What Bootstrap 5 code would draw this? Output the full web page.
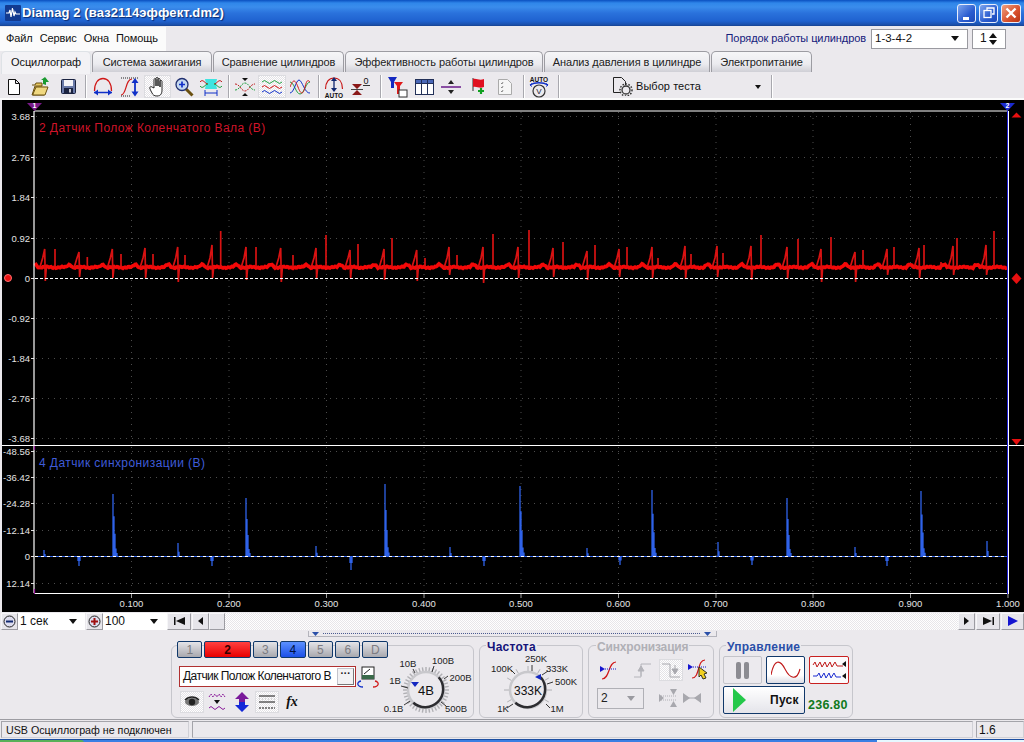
<!DOCTYPE html>
<html lang="ru">
<head>
<meta charset="utf-8">
<title>Diamag 2</title>
<link rel="stylesheet" href="https://cdn.jsdelivr.net/npm/bootstrap@5.3.0/dist/css/bootstrap.min.css">
<style>
html,body{margin:0;height:742px;overflow:hidden;background:#ebe9ed}
body{width:1024px;font:11px/1.2 "Liberation Sans",Arial,sans-serif;color:#111}
svg{display:block;flex:none}
svg text{font-family:"Liberation Sans",Arial,sans-serif}
.wtitle{height:26px;background:linear-gradient(#0a4fc0 0,#2f86ea 3px,#3a8cec 7px,#2a72dc 13px,#1f62d0 21px,#1a4ea8 25px,#16408c 26px);padding:0 3px 0 5px}
.wtitle-txt{color:#fff;font-weight:700;font-size:13px;letter-spacing:.1px;margin-left:1px;text-shadow:1px 1px 1px #0a2a70}
.wbtn{width:19px;height:19px;border:1px solid #e8eefc;border-radius:3px;background:linear-gradient(135deg,#7ea6ee,#2a5cd0 60%,#1d49b8);margin-right:3px}
.wbtn-close{width:20px;margin:0;background:linear-gradient(135deg,#f0a080,#d8502c 60%,#b83414)}
.menubar{height:25px}
.menu-left{width:166px;height:24px;background:#fbfbfb;padding-left:6px;gap:7px;letter-spacing:-.1px}
.order-lbl{color:#15207c;margin-right:5px;letter-spacing:-.08px}
.combo{background:#fff;border:1px solid #9a9aa0;height:20px;padding-left:3px;font-size:12px}
.combo-order{width:97px;margin-right:4px;font-size:11.5px}
.combo-spin{width:34px;margin-right:18px;padding-left:7px}
.caret{width:0;height:0;border:4px solid transparent;border-top:5px solid #111;border-bottom:0}
.caret-up{border-top:0;border-bottom:5px solid #111}
.spin-arrows{gap:2px}
.tabs-row{padding-left:1px;height:22px;border-bottom:1px solid #9c9ca2}
.tabs-row .nav-link{height:21px;padding:0;margin:0 1px 0 0;color:#222;font-size:11px;letter-spacing:-.08px;text-align:center;line-height:20px;background:linear-gradient(#f6f6f8,#ebebef 60%,#cfcfd6);border:1px solid #9c9ca2;border-bottom:0;border-radius:5px 5px 0 0}
.tabs-row .nav-link.active{background:#f3f2f5;height:23px;color:#111;position:relative;z-index:1}
.tw1{width:90px}.tw2{width:120px}.tw3{width:131px}.tw4{width:198px}.tw5{width:166px}.tw6{width:101px}
.toolbar{height:27px;padding:2px 0 0 1px;border-bottom:2px solid #fbfbfb;box-sizing:border-box}
.tb{height:23px;display:flex;align-items:center;justify-content:center}
.on{background:repeating-conic-gradient(#fff 0 25%,#e4e2e6 0 50%) 0 0/2px 2px;box-shadow:inset 0 0 0 1px #dcdce0}
.w22{width:22px}.w24{width:24px}.w26{width:26px}.w27{width:27px}.w28{width:28px}
.tsep{height:23px;display:flex;justify-content:center}
.tsep::after{content:"";width:1px;height:23px;background:#a8a8ae;box-shadow:1px 0 #fff}
.s7{width:7px}.s8{width:8px}.s10{width:10px}.s12{width:12px}.s16{width:16px}
.testbtn{width:202px;padding-left:46px;font-size:11px;letter-spacing:.05px;gap:3px}
.testbtn .caret{margin-left:auto;margin-right:7px;border-width:3px;border-top-width:4px}
.scope{height:512px;background:#000;margin-left:2px;width:1022px}
.hbar{height:18px}
.hbtn{height:17px;background:#e6e5ea;border:1px solid #f6f6f8;border-right-color:#9c9ca2;border-bottom-color:#9c9ca2;display:flex;align-items:center;justify-content:center}
.zoombtn{width:17px;margin-left:1px}
.hcombo{height:17px;background:#fff;padding-left:2px;font-size:12px}
.hc1{width:67px;padding-right:8px}.hc2{width:64px;padding-right:9px}
.hb1{width:24px}.hb2{width:17px;margin-left:1px}.hb3{width:16px}
.htrack{flex:1;height:17px;background:repeating-conic-gradient(#fff 0 25%,#e8e6ea 0 50%) 0 0/2px 2px}
.hb4{width:17px;margin-right:1px}.hb5{width:24px;margin-right:1px}.hb6{width:23px}
.lower{height:88px}
.splitter{width:409px;height:6px;margin:1px 0 0 308px;border:1px solid #b4b4bc;border-top:0;padding:0 5px 0 3px}
.dots{flex:1;border-top:1px dotted #4a5a90}
.panels{margin-left:171px;margin-top:8px;gap:5px}
.grp{height:73px;border:1px solid #c6c6cc;border-radius:6px}
.grp1{width:303px}.grp2{width:104px}.grp3{width:126px}.grp4{width:134px}
.grp-ttl{display:block;width:fit-content;margin:-6px 0 0 6px;padding:0 1px;height:14px;background:#ebe9ed;font-size:12px;font-weight:700;line-height:14px;letter-spacing:.25px}
.tt-navy{color:#14147a}.tt-gray{color:#b0b0b6;margin-left:7px;letter-spacing:-.16px}.tt-blue{color:#2a4fa8;margin-left:6px;letter-spacing:.22px}
.chcol{width:216px}
.chrow{gap:2px;margin:-5px 0 0 5px}
.chb{width:26px;height:17px;border:1px solid #10386a;border-radius:2px;background:linear-gradient(#e4e4e8,#a8a8ae);color:#7c7c82;font-size:12px;line-height:14px;text-align:center;padding:0}
.chb2{width:47px;background:linear-gradient(#ff4040,#e80000);color:#300;font-weight:700}
.chb4{background:linear-gradient(#5a90ff,#1c50e8);color:#001040}
.chname{width:177px;height:21px;margin:8px 0 0 7px;border:1px solid #b03030;background:#fff;padding:0 1px 0 3px;font-size:12px;letter-spacing:-.55px;white-space:nowrap}
.dotsbtn{width:17px;height:17px;margin-left:auto;border:1px solid #c4c4cc;border-right-color:#777;border-bottom-color:#777;background:#f2f2f4;font-weight:700;font-size:10px;line-height:10px;text-align:center;letter-spacing:0}
.iconrow{margin:1px 0 0 8px;gap:1px}
.ib{width:24px;height:22px;display:flex;align-items:center;justify-content:center}
.fx-t{font:italic 700 14px "Liberation Serif",serif}
.chmeter{margin:8px 0 0 0}
.knob-svg{overflow:visible}
.syncrow{margin:5px 0 0 6px}
.syncrow2{margin:6px 0 0 8px}
.syncsel{width:47px;height:21px;border:1px solid #b0b0b6;padding-left:3px;font-size:12px;color:#222;gap:0}
.syncsel .caret{margin-left:auto;margin-right:8px;border-top-color:#9a9aa0}
.cbtn{width:39px;height:28px;border:1px solid #c4c4ca;border-radius:2px;background:#eceaee;display:flex;align-items:center;justify-content:center;padding:0}
.cb-navy{border-color:#10386a;background:linear-gradient(#fff 70%,#dcdce4)}
.cb-red{border-color:#c82020;width:40px;background:#fbfafc}
.cb-row{gap:4px;margin:2px 0 0 3px}
.start-row{margin:2px 0 0 3px}
.startb{width:82px;height:28px;padding:0 0 0 9px;background:linear-gradient(#fff,#e4e4ea);border:1px solid #10386a;border-radius:2px;display:flex;align-items:center;font-weight:700;font-size:12px;color:#111;letter-spacing:.3px}
.startb span{margin-left:24px}
.freq{color:#127a20;font-weight:700;font-size:12.5px;letter-spacing:.25px;margin:0 0 1px 3px}
.statusbar{height:20px;border-top:1px solid #9c9ca2;padding:1px 0 0 1px}
.stp{height:17px;padding:0 0 0 4px;line-height:16px;border:1px solid #d0d0d6;border-top-color:#a4a4aa;border-left-color:#a4a4aa;font-size:10.7px;margin-right:3px}
.st1{width:188px}.st2{flex:1}.st3{width:48px;margin:0;padding-left:2px;font-size:12px}
.taskbar{height:4px;background:#3a80e4;border-top:1px solid #1c4ea0;position:relative}
.start-strip{width:84px;height:3px;background:#58b058;border-radius:0 4px 0 0}
.task-light{margin-left:auto;width:147px;height:3px;background:#e6f8ff}
</style>
</head>
<body>

<header class="wtitle d-flex align-items-center">
  <svg width="16" height="16" viewBox="0 0 16 16"><rect width="16" height="16" rx="1" fill="#123a90"/><path d="M1 8h3l1-3 1 7 1.500-9 1.500 8 1-4 1 2h4" fill="none" stroke="#fff" stroke-width="1.200"/></svg>
  <span class="wtitle-txt">Diamag 2 (ваз2114эффект.dm2)</span>
  <div class="d-flex ms-auto">
    <div class="wbtn d-flex align-items-end justify-content-center"><svg width="9" height="6" viewBox="0 0 9 6"><rect x="1" y="1" width="6" height="3" fill="#fff"/></svg></div>
    <div class="wbtn d-flex align-items-center justify-content-center"><svg width="12" height="12" viewBox="0 0 12 12" fill="none" stroke="#fff" stroke-width="1.300"><path d="M4 3V1h7v6H9"/><rect x="1" y="3.500" width="7" height="7"/></svg></div>
    <div class="wbtn wbtn-close d-flex align-items-center justify-content-center"><svg width="12" height="12" viewBox="0 0 12 12"><path d="M1.500 1.500l9 9M10.500 1.500l-9 9" stroke="#fff" stroke-width="2.400"/></svg></div>
  </div>
</header>

<div class="menubar d-flex align-items-center">
  <div class="menu-left d-flex align-items-center"><span>Файл</span><span>Сервис</span><span>Окна</span><span>Помощь</span></div>
  <div class="d-flex align-items-center ms-auto">
    <span class="order-lbl">Порядок работы цилиндров</span>
    <div class="combo combo-order d-flex align-items-center">1-3-4-2<i class="caret ms-auto me-2"></i></div>
    <div class="combo combo-spin d-flex align-items-center">1<span class="spin-arrows d-flex flex-column ms-auto me-2"><i class="caret caret-up"></i><i class="caret"></i></span></div>
  </div>
</div>

<ul class="nav nav-tabs tabs-row border-0 flex-nowrap">
  <li class="nav-item"><a class="nav-link active tw1" href="#">Осциллограф</a></li>
  <li class="nav-item"><a class="nav-link tw2" href="#">Система зажигания</a></li>
  <li class="nav-item"><a class="nav-link tw3" href="#">Сравнение цилиндров</a></li>
  <li class="nav-item"><a class="nav-link tw4" href="#">Эффективность работы цилиндров</a></li>
  <li class="nav-item"><a class="nav-link tw5" href="#">Анализ давления в цилиндре</a></li>
  <li class="nav-item"><a class="nav-link tw6" href="#">Электропитание</a></li>
</ul>

<div class="toolbar d-flex align-items-center">
  <div class="tb w26"><svg width="14" height="16" viewBox="0 0 14 16"><path d="M1.500.500h7l4 4v11h-11z M8.500.500v4h4" fill="#fff" stroke="#111"/></svg></div>
  <div class="tb w27"><svg width="20" height="20" viewBox="0 0 20 20"><path d="M1 8h3l1-2h6v3h-7l-3 9h12l3-8" fill="#e8c860" stroke="#6a5010"/><path d="M2 17l3-7h12l-3 8H2z" fill="#f0d880" stroke="#6a5010"/><path d="M12 7V3H10l4-3 4 5-3 0v3z" fill="#1a9a30"/></svg></div>
  <div class="tb w28"><svg width="15" height="15" viewBox="0 0 15 15"><rect x=".5" y=".5" width="14" height="14" rx="1" fill="#6a7aa8" stroke="#1a2240"/><rect x="3" y="1" width="9" height="6" fill="#f4f4f8"/><rect x="3" y="9" width="9" height="5.500" fill="#1a2240"/><rect x="8" y="10" width="2" height="3.500" fill="#c8c8d0"/></svg></div>
  <div class="tsep s7"></div>
  <div class="tb w27"><svg width="20" height="20" viewBox="0 0 20 20" fill="none"><path d="M1.500 14C1.500 6 5 1.500 10 1.500S18.500 6 18.500 14" stroke="#d01818" stroke-width="1.300"/><path d="M1 15.500h18" stroke="#1030c8" stroke-width="1.500"/><path d="M1 15.500l4-3v6zM19 15.500l-4-3v6z" fill="#1030c8"/></svg></div>
  <div class="tb w28"><svg width="20" height="20" viewBox="0 0 20 20" fill="none"><path d="M1 1h18" stroke="#222" stroke-dasharray="1 1"/><path d="M1 18c6 0 4-16 11-16" stroke="#d01818" stroke-width="1.200"/><path d="M1 19h9" stroke="#222" stroke-dasharray="1 1"/><path d="M15 3v15" stroke="#1030c8" stroke-width="1.800"/><path d="M15 1l3.500 5h-7zM15 19.500l3.500-5h-7z" fill="#1030c8"/></svg></div>
  <div class="tb w27 on"><svg width="18" height="20" viewBox="0 0 18 20"><path d="M5 11V3c0-2 2-2 2 0v6V1.500c0-1.500 2-1.500 2 0V9 2.500c0-1.500 2-1.500 2 0V10 4.500c0-1.500 2-1.500 2 0V13c0 3-1 6-5 6-3 0-4-1-5-3L1 12c-1-2 1-3 2-2z" fill="#fff" stroke="#111" stroke-width=".9"/></svg></div>
  <div class="tb w26"><svg width="20" height="20" viewBox="0 0 20 20"><path d="M12 12l6.500 6.500" stroke="#6a5010" stroke-width="3"/><circle cx="8" cy="7.500" r="6" fill="#c4d8f0" stroke="#203070" stroke-width="1.300"/><path d="M5 7.500h6M8 4.500v6" stroke="#1030c8" stroke-width="1.700"/></svg></div>
  <div class="tb w27"><svg width="22" height="20" viewBox="0 0 22 20" fill="none"><path d="M5 2h12l-1 5 1 5H5l1-5z" fill="#40e4e0"/><path d="M0 5c3-4 5 2 8 2M22 5c-3-4-5 2-8 2" stroke="#c02020"/><path d="M0 9c3 4 5-2 8-2M22 9c-3 4-5-2-8-2" stroke="#20a040"/><path d="M5 16h12" stroke="#1030c8"/><path d="M5 13v6M17 13v6" stroke="#1030c8"/></svg></div>
  <div class="tsep s8"></div>
  <div class="tb w26"><svg width="20" height="20" viewBox="0 0 20 20" fill="none"><path d="M0 7c5 0 6 7 10 7s5-7 10-7" stroke="#c02020" stroke-dasharray="2 1"/><path d="M0 13c5 0 6-7 10-7s5 7 10 7" stroke="#20a040" stroke-dasharray="2 1"/><path d="M7 1h6l-3 3zM7 19h6l-3-3z" fill="#111"/></svg></div>
  <div class="tb w28 on"><svg width="20" height="18" viewBox="0 0 20 18" fill="none"><path d="M0 4q2.500-3 5 0t5 0 5 0 5 0" stroke="#20a040"/><path d="M0 9q2.500-3 5 0t5 0 5 0 5 0" stroke="#d01818"/><path d="M0 14q2.500-3 5 0t5 0 5 0 5 0" stroke="#1030c8"/></svg></div>
  <div class="tb w28"><svg width="20" height="18" viewBox="0 0 20 18" fill="none"><path d="M0 4c4 0 6 12 10 12S16 4 20 4" stroke="#20a040"/><path d="M0 15C4 15 6 2 9 2s6 14 11 13" stroke="#1030c8"/><path d="M0 9C3 1 5 1 8 9s5 8 7 0 3-7 5-5" stroke="#d01818"/></svg></div>
  <div class="tsep s8"></div>
  <div class="tb w24"><svg width="20" height="22" viewBox="0 0 20 22" fill="none"><path d="M1.500 13C1.500 6 5 2 10 2s8.500 4 8.500 11" stroke="#c81818" stroke-width="1.200"/><path d="M10 3v12" stroke="#102870" stroke-width="1.300"/><path d="M10 1l3 4H7zM10 16l3-4H7z" fill="#102870"/><text x="10" y="21.500" font-size="6.500" font-weight="700" text-anchor="middle" fill="#111">AUTO</text></svg></div>
  <div class="tb w28"><svg width="20" height="20" viewBox="0 0 20 20"><path d="M2 7h10L7 12zM2 18h10l-5-5z" fill="#8a1818"/><path d="M1 12.500h12" stroke="#444"/><path d="M13 8.500h7" stroke="#333"/><text x="16" y="7" font-size="9" text-anchor="middle" fill="#111">0</text></svg></div>
  <div class="tsep s12"></div>
  <div class="tb w24"><svg width="20" height="22" viewBox="0 0 20 22"><path d="M0 1h9L6 6v6H3V6z" fill="#1428c0"/><path d="M6 6h9l-3 4v8H9V10z" fill="#e01818"/><rect x="11" y="14" width="8" height="7" fill="#fff" stroke="#333"/></svg></div>
  <div class="tb w28"><svg width="19" height="16" viewBox="0 0 19 16"><rect x=".5" y=".5" width="18" height="15" fill="#fff" stroke="#223058"/><rect x=".5" y=".5" width="18" height="4" fill="#4a68b8" stroke="#223058"/><path d="M6.500 1v14M12.500 1v14" stroke="#223058"/></svg></div>
  <div class="tb w26"><svg width="20" height="14" viewBox="0 0 20 14"><path d="M0 7h20" stroke="#6a1a8a" stroke-width="1.500"/><path d="M10 0l3 4H7zM10 14l3-4H7z" fill="#222"/></svg></div>
  <div class="tb w28"><svg width="15" height="18" viewBox="0 0 15 18"><path d="M2 0v13" stroke="#333"/><path d="M2 1c4-1 6 2 11 0v8c-5 2-7-1-11 0z" fill="#e01020"/><path d="M10 10v6M7 13h6" stroke="#10a020" stroke-width="2.200"/></svg></div>
  <div class="tb w26"><svg width="14" height="16" viewBox="0 0 14 16"><path d="M.5.500h9l4 4v11H.500z" fill="#f6f6f6" stroke="#aaa"/><path d="M3 4l1 1 1-2M3 8l1 1 1-2M3 12l1 1 1-2" stroke="#888" fill="none"/></svg></div>
  <div class="tsep s10"></div>
  <div class="tb w22"><svg width="20" height="22" viewBox="0 0 20 22" fill="none"><text x="10" y="6" font-size="6.500" font-weight="700" text-anchor="middle" fill="#111">AUTO</text><path d="M1 9c5-3 13-3 18 0" stroke="#1030c8" stroke-width="1.300"/><circle cx="10" cy="15" r="6" stroke="#333" stroke-width="1.200"/><path d="M3 7.500l-2 1.500 2 1.500M17 7.500l2 1.500-2 1.500" stroke="#1030c8"/><text x="10" y="18" font-size="8" text-anchor="middle" fill="#223">V</text></svg></div>
  <div class="tsep s16"></div>
  <div class="tb testbtn"><svg width="21" height="19" viewBox="0 0 21 19" fill="none"><path d="M1.500.500h8l4 4V8M1.500.500v15h7" stroke="#222"/><circle cx="14" cy="13" r="4" stroke="#333" stroke-width="1.300"/><circle cx="14" cy="13" r="6" stroke="#333" stroke-width="1.500" stroke-dasharray="1.500 1.500"/></svg><span>Выбор теста</span><i class="caret"></i></div>
  <div class="tsep s7"></div>
</div>

<div class="scope">
  <svg id="plot" width="1022" height="512" viewBox="2 100 1022 512">
    <g id="grid"></g>
    <text x="39" y="132" font-size="12" letter-spacing=".42" fill="#d0142a">2 Датчик Полож Коленчатого Вала (В)</text>
    <text x="39" y="467" font-size="12" letter-spacing=".42" fill="#3f5cd8">4 Датчик синхронизации (В)</text>
    <path id="redbase" fill="none" stroke="#f40808" stroke-width="3.600"/>
    <path id="redspk" fill="none" stroke="#d81212" stroke-width="1.700"/>
    <path id="bluespk" fill="none" stroke="#2f62e8" stroke-width="1.300"/>
    <path d="M35 278.500H1007" stroke="#fff" stroke-dasharray="3 2"/>
    <path d="M35 556.500H1007" stroke="#2f62e8"/>
    <path d="M35 556.500H1007" stroke="#fff" stroke-dasharray="3 3"/>
    <path d="M34 111V445M34 446V593M34.500 111H1008M34.500 593.500H1008M2 445.500H1024" stroke="#fff" stroke-width="1.200"/>
    <path d="M1007.500 111V594" stroke="#2020d8"/>
    <path d="M1008.500 111V594" stroke="#fff"/>
    <path d="M34.500 446v4M34.500 589v5" stroke="#a020a0" stroke-width="1.200"/>
    <path d="M27 103h15l-7.500 8z" fill="#7a1a8a"/><text x="34.500" y="108" font-size="7" font-weight="700" text-anchor="middle" fill="#fff">1</text>
    <path d="M1000 103h15l-7.500 8z" fill="#1a2ad0"/><text x="1007.500" y="108" font-size="7" font-weight="700" text-anchor="middle" fill="#fff">2</text>
    <path d="M1016.500 112.500l5 5h-10zM1016.500 445l5-6h-10z" fill="#e81010"/>
    <path d="M1016.500 273l5 5.500-5 5.500-5-5.500z" fill="#e81010"/>
    <circle cx="8" cy="278" r="3.500" fill="#e81010" stroke="#ff7070"/>
  </svg>
</div>

<div class="hbar d-flex align-items-center">
  <div class="hbtn zoombtn"><svg width="13" height="13" viewBox="0 0 13 13"><circle cx="6.500" cy="6.500" r="5.500" fill="#dde" stroke="#222"/><path d="M3 6.500h7" stroke="#102870" stroke-width="2"/></svg></div>
  <div class="hcombo hc1 d-flex align-items-center">1 сек<i class="caret ms-auto"></i></div>
  <div class="hbtn zoombtn"><svg width="13" height="13" viewBox="0 0 13 13"><circle cx="6.500" cy="6.500" r="5.500" fill="#dde" stroke="#222"/><path d="M3 6.500h7M6.500 3v7" stroke="#a01010" stroke-width="2"/></svg></div>
  <div class="hcombo hc2 d-flex align-items-center">100<i class="caret ms-auto"></i></div>
  <div class="hbtn hb1"><svg width="11" height="8" viewBox="0 0 11 8"><path d="M0 0h1.500v8H0zM2 4l9-4v8z" fill="#111"/></svg></div>
  <div class="hbtn hb2"><svg width="5" height="8" viewBox="0 0 5 8"><path d="M5 0v8L0 4z" fill="#111"/></svg></div>
  <div class="hbtn hb3"></div>
  <div class="htrack"></div>
  <div class="hbtn hb4"><svg width="5" height="8" viewBox="0 0 5 8"><path d="M0 0v8l5-4z" fill="#111"/></svg></div>
  <div class="hbtn hb5"><svg width="11" height="8" viewBox="0 0 11 8"><path d="M11 0H9.500v8H11zM9 4L0 0v8z" fill="#111"/></svg></div>
  <div class="hbtn hb6"><svg width="10" height="10" viewBox="0 0 10 10"><path d="M0 0v10l10-5z" fill="#1414d0"/></svg></div>
</div>

<div class="lower">
  <div class="splitter d-flex align-items-center"><svg width="7" height="4" viewBox="0 0 7 4" class="me-1"><path d="M0 0h7L3.500 4z" fill="#2a4fa8"/></svg><span class="dots"></span><svg width="7" height="4" viewBox="0 0 7 4" class="ms-1"><path d="M0 0h7L3.500 4z" fill="#2a4fa8"/></svg></div>
  <div class="panels d-flex">
    <section class="grp grp1 d-flex">
      <div class="chcol">
        <div class="chrow d-flex">
          <button class="chb">1</button><button class="chb chb2">2</button><button class="chb">3</button><button class="chb chb4">4</button><button class="chb">5</button><button class="chb">6</button><button class="chb">D</button>
        </div>
        <div class="d-flex align-items-start">
          <div class="chname d-flex align-items-center"><span>Датчик Полож Коленчатого В</span><span class="dotsbtn">···</span></div>
          <svg class="chmeter" width="24" height="24" viewBox="0 0 24 24"><rect x="6" y="1" width="12" height="12" fill="#fff" stroke="#222"/><rect x="6" y="9" width="12" height="4" fill="#3a6a4a"/><path d="M8 8l6-5" stroke="#222"/><path d="M5 15c-5 1-4 6 2 6" fill="none" stroke="#1030c8" stroke-width="1.300"/><path d="M19 15c5 1 4 6-2 6" fill="none" stroke="#d01818" stroke-width="1.300"/></svg>
        </div>
        <div class="iconrow d-flex">
          <div class="ib on"><svg width="18" height="12" viewBox="0 0 18 12"><ellipse cx="9" cy="6" rx="7" ry="4" fill="#777"/><circle cx="9" cy="6" r="3.200" fill="#222"/><path d="M2 4c4-4 10-4 14 0" stroke="#222" stroke-width="1.400" fill="none"/></svg></div>
          <div class="ib"><svg width="18" height="20" viewBox="0 0 18 20" fill="none"><path d="M1 5l2-3 2 3 2-3 2 3 2-3 2 3 2-3 2 3" stroke="#8a1a9a" stroke-dasharray="2 1"/><path d="M6 8h6l-3 4z" fill="#111"/><path d="M1 16q2-3 4 0t4 0 4 0 4 0" stroke="#8a1a9a"/></svg></div>
          <div class="ib"><svg width="16" height="20" viewBox="0 0 16 20"><path d="M8 0l7 7h-4v3H5V7H1z" fill="#7a1a9a"/><path d="M8 20l7-7h-4v-3H5v3H1z" fill="#1428d8"/></svg></div>
          <div class="ib on"><svg width="18" height="16" viewBox="0 0 18 16"><path d="M1 2h16M1 8h16" stroke="#111"/><path d="M1 14h16" stroke="#111" stroke-dasharray="2 1"/><path d="M1 5h16" stroke="#bbb" stroke-dasharray="1 2"/></svg></div>
          <div class="ib"><span class="fx-t">fx</span></div>
        </div>
      </div>
      <svg id="knob1" class="knob-svg ms-auto" width="84" height="72" viewBox="389 646 84 72"></svg>
    </section>
    <section class="grp grp2">
      <span class="grp-ttl tt-navy">Частота</span>
      <svg id="knob2" class="knob-svg" width="102" height="63" viewBox="480 654 102 63"></svg>
    </section>
    <section class="grp grp3">
      <span class="grp-ttl tt-gray">Синхронизация</span>
      <div class="syncrow d-flex align-items-center">
        <div class="ib ms-1"><svg width="22" height="20" viewBox="0 0 22 20" fill="none"><path d="M2 19c8 0 6-17 14-17" stroke="#d01818" stroke-width="1.200"/><path d="M0 6l5 3-5 3z" fill="#1414d0"/><path d="M5 9h12" stroke="#1414d0" stroke-dasharray="1 1"/></svg></div>
        <div class="ib ms-2"><svg width="20" height="18" viewBox="0 0 20 18" fill="none" stroke="#b4b4ba"><path d="M1 16h7V3h10"/><path d="M8 5l-3 5h6zM8 15V9" fill="#b4b4ba"/></svg></div>
        <div class="ib on ms-1"><svg width="20" height="18" viewBox="0 0 20 18" fill="none" stroke="#a8a8ae"><path d="M1 3h8v13h10"/><path d="M14 13l-3-5h6zM14 4v6" fill="#a8a8ae"/></svg></div>
        <div class="ib ms-1"><svg width="22" height="22" viewBox="0 0 22 22" fill="none"><path d="M4 19C12 19 9 1 17 1" stroke="#d01818" stroke-width="1.200"/><path d="M0 5l5 3-5 3z" fill="#1414d0"/><path d="M5 8h14" stroke="#1414d0" stroke-dasharray="1 1"/><path d="M11 8l8 6-3 1 2 4-3 1-2-4-2 2z" fill="#f0d020" stroke="#332"/></svg></div>
      </div>
      <div class="syncrow2 d-flex align-items-center">
        <div class="syncsel d-flex align-items-center">2<i class="caret"></i></div>
        <div class="ib ms-2 ps-2"><svg width="18" height="18" viewBox="0 0 18 18"><path d="M0 7h18M0 11h18" stroke="#b0b0b6" stroke-dasharray="1 1"/><path d="M11 0h7l-3.500 6zM11 18h7l-3.500-6zM0 5l5 4-5 4z" fill="#a8a8ae"/></svg></div>
        <div class="ib ms-1"><svg width="18" height="10" viewBox="0 0 18 10"><path d="M0 0l7 5-7 5zM18 0l-7 5 7 5z" fill="#a8a8ae"/><path d="M0 5h18" stroke="#a8a8ae"/></svg></div>
      </div>
    </section>
    <section class="grp grp4">
      <span class="grp-ttl tt-blue">Управление</span>
      <div class="cb-row d-flex">
        <button class="cbtn"><svg width="13" height="17" viewBox="0 0 13 17"><rect x="0" y="0" width="5" height="17" rx="2" fill="#8c8c92"/><rect x="8" y="0" width="5" height="17" rx="2" fill="#8c8c92"/></svg></button>
        <button class="cbtn cb-navy"><svg width="30" height="22" viewBox="0 0 30 22" fill="none"><path d="M0 16C3 0 9 0 14 10s12 12 15 0" stroke="#c01818" stroke-width="1.100"/></svg></button>
        <button class="cbtn cb-red"><svg width="34" height="22" viewBox="0 0 34 22" fill="none"><path d="M1 6l2-3 2 5 3-5 2 5 3-5 2 5 3-5 2 5 3-5 2 4h6" stroke="#c01818"/><path d="M1 17h4l2-3 2 5 3-5 2 5 3-5 2 5 3-5 2 4h5" stroke="#1a2ad0"/><path d="M34 2v6l-4-3zM34 14v6l-4-3z" fill="#111"/></svg></button>
      </div>
      <div class="start-row d-flex align-items-end"><button class="startb"><svg width="13" height="24" viewBox="0 0 13 24"><path d="M0 0l13 12L0 24z" fill="#24c84a"/></svg><span>Пуск</span></button><span class="freq">236.80</span></div>
    </section>
  </div>
</div>

<div class="statusbar d-flex">
  <div class="stp st1">USB Осциллограф не подключен</div>
  <div class="stp st2"></div>
  <div class="stp st3">1.6</div>
</div>
<div class="taskbar d-flex"><div class="start-strip"></div><div class="task-light"></div></div>

<script>
const NS='http://www.w3.org/2000/svg';
function el(p,n,a,t){const e=document.createElementNS(NS,n);for(const k in a)e.setAttribute(k,a[k]);if(t!==undefined)e.textContent=t;p.appendChild(e);return e;}
const g=document.getElementById('grid');
const GRID='#4c4c4c';
const vx=[131.5,229,326.5,424,521,618.5,716,813,910.5,1008];
const xl=['0.100','0.200','0.300','0.400','0.500','0.600','0.700','0.800','0.900','1.000'];
vx.forEach((x,i)=>{
  if(i<9){el(g,'path',{d:`M${x} 112V444M${x} 447V593`,stroke:GRID,'stroke-dasharray':'1 5'});}
  el(g,'path',{d:`M${x} 594V598`,stroke:'#999'});
  el(g,'text',{x:x,y:607,'font-size':9.5,'text-anchor':'middle',fill:'#e4e4e4'},xl[i]);
});
[[116,'3.68'],[157,'2.76'],[197,'1.84'],[238,'0.92'],[278,'0'],[318,'-0.92'],[358,'-1.84'],[398,'-2.76'],[438,'-3.68'],
 [451,'-48.56'],[477,'-36.42'],[503,'-24.28'],[530,'-12.14'],[556,'0'],[583,'12.14']].forEach(([y,t])=>{
  if(y!=278&&y!=556)el(g,'path',{d:`M36 ${y+.5}H1006`,stroke:GRID,'stroke-dasharray':'1 5'});
  el(g,'path',{d:`M31 ${y+.5}H34`,stroke:'#ddd'});
  el(g,'text',{x:30,y:y+3.5,'font-size':9.5,'text-anchor':'end',fill:'#e4e4e4'},t);
});
const A=[[44.7,249,281],[79,252,277],[112.3,249,278],[145,248,278],[177.7,247,282],[212,245,278],[246,247,280],[280.7,248,282],[316,248,278],[350,250,278],[384,249,280],[416.700,250,281],[449,247,275],[483,247,283],[518,247,278],[553,248,277],[587,251,280],[619,249,277],[652,247,278],[685,246,279],[717,246,277],[751,246,280],[787,247,279],[821,249,282],[855,252,282],[887,249,275],[919,248,278],[953,246,275],[986,245,275]];
const B=[[55,249],[87.3,257],[121,254],[153,254],[185,255],[220.7,231],[256,247],[293,255],[326,235],[358,244],[392,238],[425,258],[457,255],[493,234],[529,230],[563,242],[595,245],[627,247],[658,258],[691,254],[723,253],[761,235],[798,239],[831,237],[863,250],[894,247],[924,245],[941,262],[957,238],[994,231]];
let d='M35 263';
for(let x=36;x<=1007;x+=1){
  let y=267.3+Math.sin(x*1.7)*.5+Math.sin(x*.37)*.5;
  for(const a of A){const k=x-(a[0]-13);if(k>=0&&k<=7)y-=2.6*Math.sin(k/7*Math.PI);}
  d+=`L${x} ${y.toFixed(1)}`;
}
document.getElementById('redbase').setAttribute('d',d);
let s='';
for(const a of A){s+=`M${a[0]-5} 268L${a[0]-2} 258L${a[0]} ${a[1]}L${a[0]+.6} ${a[2]}L${a[0]+1.600} 268 `;}
for(const b of B){s+=`M${b[0]} 267V${b[1]} `;}
document.getElementById('redspk').setAttribute('d',s);
let b='';
[[113,494],[246,498],[385,484],[520,486],[652,490],[787,498],[921,491]].forEach(([x,t])=>{
  const h=556-t;
  b+=`M${x} 556V${t}M${x+1} 556V${556-h*.64}M${x+2} 556V${556-h*.36}M${x+3} 556V${556-h*.12}M${x+4} 556V${556-h*.05}`;
});
[[44,550],[178,543],[316,546],[450,547],[587,548],[718,542],[855,547],[987,541]].forEach(([x,t])=>{
  b+=`M${x} 556V${t}M${x+1} 556V${(t+556*2)/3}`;
});
[[79,566],[212,566],[351,570],[484,566],[620,565],[752,565],[887,566]].forEach(([x,t])=>{
  b+=`M${x} 556V${t}M${x-1} 556V${(t+556)/2}M${x+1} 556V${(t+556)/2}`;
});
document.getElementById('bluespk').setAttribute('d',b);
function knob(id,cx,cy,val,dir,lbls,lines,dense){
  const k=document.getElementById(id);
  for(let a=0;a<360;a+=dense?9:30){
    const r=a*Math.PI/180,r1=dense?18:19,r2=dense?23:24;
    if(!dense&&a>45&&a<135)continue;
    el(k,'path',{d:`M${cx+r1*Math.cos(r)} ${cy+r1*Math.sin(r)}L${cx+r2*Math.cos(r)} ${cy+r2*Math.sin(r)}`,stroke:'#b0b0b4','stroke-width':dense?1.400:1});
  }
  el(k,'circle',{cx:cx,cy:cy,r:18,fill:'#ebe9ed',stroke:'#c8c8cc','stroke-width':2.500});
  el(k,'path',{d:`M${cx+12.700} ${cy-12.700}A18 18 0 0 1 ${cx-12.700} ${cy+12.700}`,fill:'none',stroke:'#2c2c30','stroke-width':2.500});
  el(k,'text',{x:cx,y:cy+4.500,'font-size':dense?13:12,'text-anchor':'middle',fill:'#111'},val);
  el(k,'path',{d:dir,fill:'#1428c0'});
  lines.forEach(l=>el(k,'path',{d:l,stroke:'#222','stroke-width':.9}));
  lbls.forEach(([x,y,t])=>el(k,'text',{x:x,y:y,'font-size':9.5,'text-anchor':'middle',fill:'#222'},t));
}
knob('knob1',426,690,'4В','M411 682h8l-4 5z',
 [[408,666.500,'10В'],[443,663.500,'100В'],[395,683.500,'1В'],[460.500,680.500,'200В'],[393.500,711.500,'0.1В'],[456,711.500,'500В']],
 ['M401 686L408 688','M413 669L415 673','M434 666L432 672','M448 676L444 679','M404 705L410 701','M446 706L441 702'],true);
knob('knob2',528,690,'333K','M541 674l-6 3 6 3z',
 [[536,661.500,'250K'],[502,671.500,'100K'],[557,671.500,'333K'],[566,684.500,'500K'],[503,711.500,'1K'],[557,711.500,'1M']],
 ['M532 665V671','M511 670L515 674','M548 671L542 675','M553 682L547 684','M507 708L513 704','M546 704L550 708'],false);
</script>
</body>
</html>
